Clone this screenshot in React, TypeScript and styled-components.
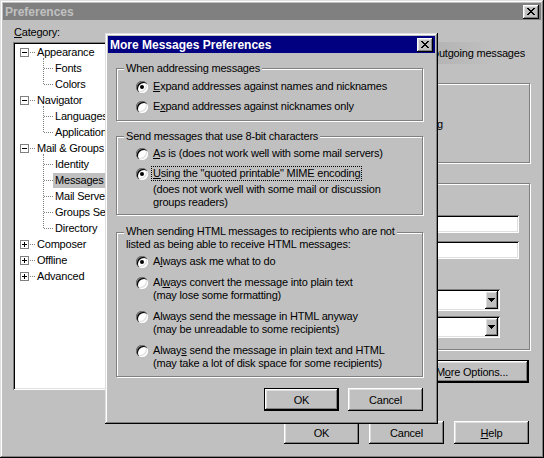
import React from "react";
import styled, { createGlobalStyle, css } from "styled-components";

const GlobalStyle = createGlobalStyle`
  * { box-sizing: border-box; }
  html, body { margin: 0; padding: 0; background: #c0c0c0; }
  body {
    font-family: "Liberation Sans", Arial, sans-serif;
    font-size: 11px;
    letter-spacing: -0.2px;
    color: #000;
  }
`;

const raised = css`
  box-shadow: inset -1px -1px #000, inset 1px 1px #dfdfdf,
    inset -2px -2px #808080, inset 2px 2px #fff;
`;

const buttonFace = css`
  box-shadow: inset -1px -1px #000, inset 1px 1px #fff,
    inset -2px -2px #808080, inset 2px 2px #dfdfdf;
`;

const sunken = css`
  box-shadow: inset 1px 1px #808080, inset -1px -1px #fff,
    inset 2px 2px #000, inset -2px -2px #dfdfdf;
`;

const Desktop = styled.div`
  position: relative;
  width: 544px;
  height: 458px;
  overflow: hidden;
`;

const Window = styled.div`
  width: 544px;
  height: 458px;
  padding: 3px;
  background: #c0c0c0;
  ${raised};
  display: flex;
  flex-direction: column;
`;

const TitleBar = styled.div<{ $active?: boolean }>`
  flex: none;
  height: 17px;
  display: flex;
  align-items: center;
  justify-content: space-between;
  padding: 0 2px;
  background: ${({ $active }) => ($active ? "#000080" : "#808080")};
  color: ${({ $active }) => ($active ? "#fff" : "#c0c0c0")};
  font-size: 12px;
  font-weight: bold;
  letter-spacing: 0;
  white-space: nowrap;
`;

const CloseBox = styled.span`
  width: 16px;
  height: 14px;
  background: #c0c0c0;
  ${buttonFace};
  display: flex;
  align-items: center;
  justify-content: center;
  padding-bottom: 1px;
`;

const WindowBody = styled.div`
  flex: 1;
  display: flex;
  gap: 10px;
  padding: 6px 11px 0 10px;
`;

const LeftCol = styled.div`
  width: 157px;
  display: flex;
  flex-direction: column;
`;

const FieldLabel = styled.div`
  line-height: 13px;
  margin-bottom: 3px;
  padding-left: 1px;
`;

const Tree = styled.div`
  height: 348px;
  padding: 2px;
  background: #fff;
  ${sunken};
  overflow: hidden;
`;

const TreeRow = styled.div`
  display: flex;
  align-items: center;
  height: 16px;
  white-space: nowrap;
`;

const Expander = styled.span`
  flex: none;
  width: 9px;
  height: 9px;
  margin-left: 5px;
  border: 1px solid #808080;
  background: #fff;
  display: flex;
  align-items: center;
  justify-content: center;
`;

const Stub = styled.span`
  flex: none;
  width: 5px;
  margin-left: 1px;
  border-top: 1px dotted #808080;
`;

const ChildList = styled.div`
  position: relative;
  margin-left: 28px;
  &::before {
    content: "";
    position: absolute;
    left: 0;
    top: -2px;
    bottom: 8px;
    border-left: 1px dotted #808080;
  }
`;

const Branch = styled.span`
  flex: none;
  width: 9px;
  margin-left: 1px;
  border-top: 1px dotted #808080;
`;

const NodeLabel = styled.span<{ $selected?: boolean }>`
  padding: 1px 2px;
  line-height: 13px;
  background: ${({ $selected }) => ($selected ? "#c0c0c0" : "transparent")};
`;

const RightCol = styled.div`
  flex: 1;
  display: flex;
  flex-direction: column;
  padding-top: 16px;
`;

const PanelHeader = styled.div`
  height: 22px;
  display: flex;
  align-items: center;
  justify-content: flex-end;
  padding: 0 5px 0 6px;
  background: linear-gradient(to right, #808080 0%, #c0c0c0 90%);
  white-space: nowrap;
`;

const Group = styled.div<{ $gap?: number; $height?: number }>`
  flex: none;
  margin-top: ${({ $gap }) => $gap ?? 0}px;
  height: ${({ $height }) => ($height ? `${$height}px` : "auto")};
  border: 1px solid #808080;
  box-shadow: inset 1px 1px #fff, 1px 1px #fff;
  display: flex;
  flex-direction: column;
`;

const GroupTitle = styled.div<{ $lift?: number }>`
  align-self: flex-start;
  margin: ${({ $lift }) => -($lift ?? 7)}px 0 0 7px;
  padding: 0 2px;
  line-height: 13px;
  background: #c0c0c0;
  white-space: nowrap;
`;

const Options = styled.div<{ $top: number; $bottom: number; $gap: number }>`
  display: flex;
  flex-direction: column;
  gap: ${({ $gap }) => $gap}px;
  padding: ${({ $top, $bottom }) => `${$top}px 0 ${$bottom}px 19px`};
`;

const OptionRow = styled.div`
  display: flex;
  align-items: flex-start;
  gap: 5px;
  line-height: 13px;
  white-space: nowrap;
`;

const RadioDot = styled.span<{ $checked?: boolean }>`
  flex: none;
  width: 12px;
  height: 12px;
  margin-top: 1px;
  border-radius: 50%;
  background: #fff;
  box-shadow: inset 1px 1px #808080, inset 2px 2px #000,
    inset -1px -1px #fff, inset -2px -2px #dfdfdf;
  display: flex;
  align-items: center;
  justify-content: center;
  &::after {
    content: "";
    width: 4px;
    height: 4px;
    border-radius: 50%;
    background: ${({ $checked }) => ($checked ? "#000" : "transparent")};
  }
`;

const OptionText = styled.div`
  display: flex;
  flex-direction: column;
`;

const FocusLine = styled.span`
  align-self: flex-start;
  margin: -1px 0 2px -2px;
  padding: 0 1px;
  border: 1px dotted #000;
`;

const FormRow = styled.div<{ $gap?: number; $right: number }>`
  display: flex;
  align-items: center;
  justify-content: flex-end;
  margin-top: ${({ $gap }) => $gap ?? 0}px;
  padding: 0 ${({ $right }) => $right}px 0 10px;
  line-height: 13px;
  white-space: nowrap;
`;

const TextField = styled.div<{ $width: number }>`
  width: ${({ $width }) => $width}px;
  height: 18px;
  background: #fff;
  ${sunken};
`;

const SelectBox = styled.div<{ $width: number }>`
  width: ${({ $width }) => $width}px;
  height: 22px;
  padding: 2px;
  background: #fff;
  ${sunken};
  display: flex;
  align-items: center;
  justify-content: flex-end;
`;

const SelectArrow = styled.span`
  width: 13px;
  height: 18px;
  background: #c0c0c0;
  ${buttonFace};
  display: flex;
  align-items: center;
  justify-content: center;
`;

const Button = styled.div<{ $default?: boolean; $width?: number }>`
  flex: none;
  width: ${({ $width }) => $width ?? 75}px;
  height: 23px;
  display: flex;
  align-items: center;
  justify-content: center;
  background: #c0c0c0;
  border: ${({ $default }) => ($default ? "1px solid #000" : "none")};
  ${buttonFace};
  white-space: nowrap;
`;

const MoreButton = styled(Button)`
  align-self: flex-end;
  margin: 10px 1px 0 0;
`;

const Footer = styled.div`
  flex: none;
  display: flex;
  justify-content: flex-end;
  gap: 10px;
  padding: 0 12px 11px 0;
`;

const Dialog = styled.div`
  position: absolute;
  left: 105px;
  top: 33px;
  width: 333px;
  height: 391px;
  padding: 3px;
  background: #c0c0c0;
  ${raised};
  display: flex;
  flex-direction: column;
`;

const DialogBody = styled.div`
  flex: 1;
  display: flex;
  flex-direction: column;
  padding: 15px 12px 0 8px;
`;

const ButtonRow = styled.div`
  display: flex;
  justify-content: flex-end;
  gap: 9px;
  margin-top: 11px;
`;

function CloseIcon() {
  return (
    <svg width="8" height="7" viewBox="0 0 8 7" shapeRendering="crispEdges">
      <path d="M0 0h2v1h-2zM6 0h2v1h-2zM1 1h2v1h-2zM5 1h2v1h-2zM2 2h4v1h-4zM3 3h2v1h-2zM2 4h4v1h-4zM1 5h2v1h-2zM5 5h2v1h-2zM0 6h2v1h-2zM6 6h2v1h-2z" fill="#000" />
    </svg>
  );
}

function ExpandSign({ open }: { open?: boolean }) {
  return (
    <svg width="7" height="7" viewBox="0 0 7 7" shapeRendering="crispEdges">
      <rect x="1" y="3" width="5" height="1" fill="#000" />
      {!open && <rect x="3" y="1" width="1" height="5" fill="#000" />}
    </svg>
  );
}

function DownArrow() {
  return (
    <svg width="7" height="4" viewBox="0 0 7 4" shapeRendering="crispEdges">
      <path d="M0 0h7v1h-7zM1 1h5v1h-5zM2 2h3v1h-3zM3 3h1v1h-1z" fill="#000" />
    </svg>
  );
}

const tree = [
  { label: "Appearance", open: true, children: ["Fonts", "Colors"] },
  { label: "Navigator", open: true, children: ["Languages", "Applications"] },
  {
    label: "Mail & Groups",
    open: true,
    children: ["Identity", "Messages", "Mail Servers", "Groups Servers", "Directory"],
  },
  { label: "Composer", open: false, children: [] },
  { label: "Offline", open: false, children: [] },
  { label: "Advanced", open: false, children: [] },
];

function Radio({ checked, children }: { checked?: boolean; children: React.ReactNode }) {
  return (
    <OptionRow>
      <RadioDot $checked={checked} />
      <OptionText>{children}</OptionText>
    </OptionRow>
  );
}

function Select() {
  return (
    <SelectBox $width={140}>
      <SelectArrow>
        <DownArrow />
      </SelectArrow>
    </SelectBox>
  );
}

export default function App() {
  return (
    <>
      <GlobalStyle />
      <Desktop>
        <Window>
          <TitleBar>
            <span>Preferences</span>
            <CloseBox>
              <CloseIcon />
            </CloseBox>
          </TitleBar>
          <WindowBody>
            <LeftCol>
              <FieldLabel>
                <u>C</u>ategory:
              </FieldLabel>
              <Tree>
                {tree.map((node) => (
                  <div key={node.label}>
                    <TreeRow>
                      <Expander>
                        <ExpandSign open={node.open} />
                      </Expander>
                      <Stub />
                      <NodeLabel>{node.label}</NodeLabel>
                    </TreeRow>
                    {node.open && node.children.length > 0 && (
                      <ChildList>
                        {node.children.map((child) => (
                          <TreeRow key={child}>
                            <Branch />
                            <NodeLabel $selected={child === "Messages"}>{child}</NodeLabel>
                          </TreeRow>
                        ))}
                      </ChildList>
                    )}
                  </div>
                ))}
              </Tree>
            </LeftCol>
            <RightCol>
              <PanelHeader>
                <span>Settings for outgoing messages</span>
              </PanelHeader>
              <Group $gap={19} $height={80}>
                <FormRow $gap={34} $right={86}>
                  <span>Quote original when replying</span>
                </FormRow>
              </Group>
              <Group $gap={20} $height={167}>
                <FormRow $gap={31} $right={10}>
                  <TextField $width={180} />
                </FormRow>
                <FormRow $gap={8} $right={10}>
                  <TextField $width={180} />
                </FormRow>
                <FormRow $gap={30} $right={29}>
                  <Select />
                </FormRow>
                <FormRow $gap={5} $right={29}>
                  <Select />
                </FormRow>
              </Group>
              <MoreButton $default $width={114}>
                M<u>o</u>re Options...
              </MoreButton>
            </RightCol>
          </WindowBody>
          <Footer>
            <Button>OK</Button>
            <Button>Cancel</Button>
            <Button>
              <u>H</u>elp
            </Button>
          </Footer>
        </Window>

        <Dialog>
          <TitleBar $active>
            <span>More Messages Preferences</span>
            <CloseBox>
              <CloseIcon />
            </CloseBox>
          </TitleBar>
          <DialogBody>
            <Group>
              <GroupTitle>When addressing messages</GroupTitle>
              <Options $top={5} $bottom={7} $gap={7}>
                <Radio checked>
                  <span>
                    <u>E</u>xpand addresses against names and nicknames
                  </span>
                </Radio>
                <Radio>
                  <span>
                    E<u>x</u>pand addresses against nicknames only
                  </span>
                </Radio>
              </Options>
            </Group>
            <Group $gap={15}>
              <GroupTitle>Send messages that use 8-bit characters</GroupTitle>
              <Options $top={4} $bottom={5} $gap={7}>
                <Radio>
                  <span>
                    <u>A</u>s is (does not work well with some mail servers)
                  </span>
                </Radio>
                <Radio checked>
                  <FocusLine>
                    <u>U</u>sing the "quoted printable" MIME encoding
                  </FocusLine>
                  <span>(does not work well with some mail or discussion</span>
                  <span>groups readers)</span>
                </Radio>
              </Options>
            </Group>
            <Group $gap={17}>
              <GroupTitle $lift={8}>
                When sending HTML messages to recipients who are not
                <br />
                listed as being able to receive HTML messages:
              </GroupTitle>
              <Options $top={4} $bottom={6} $gap={8}>
                <Radio checked>
                  <span>
                    A<u>l</u>ways ask me what to do
                  </span>
                </Radio>
                <Radio>
                  <span>
                    Al<u>w</u>ays convert the message into plain text
                  </span>
                  <span>(may lose some formatting)</span>
                </Radio>
                <Radio>
                  <span>
                    Alwa<u>y</u>s send the message in HTML anyway
                  </span>
                  <span>(may be unreadable to some recipients)</span>
                </Radio>
                <Radio>
                  <span>
                    Alway<u>s</u> send the message in plain text and HTML
                  </span>
                  <span>(may take a lot of disk space for some recipients)</span>
                </Radio>
              </Options>
            </Group>
            <ButtonRow>
              <Button $default>OK</Button>
              <Button>Cancel</Button>
            </ButtonRow>
          </DialogBody>
        </Dialog>
      </Desktop>
    </>
  );
}
